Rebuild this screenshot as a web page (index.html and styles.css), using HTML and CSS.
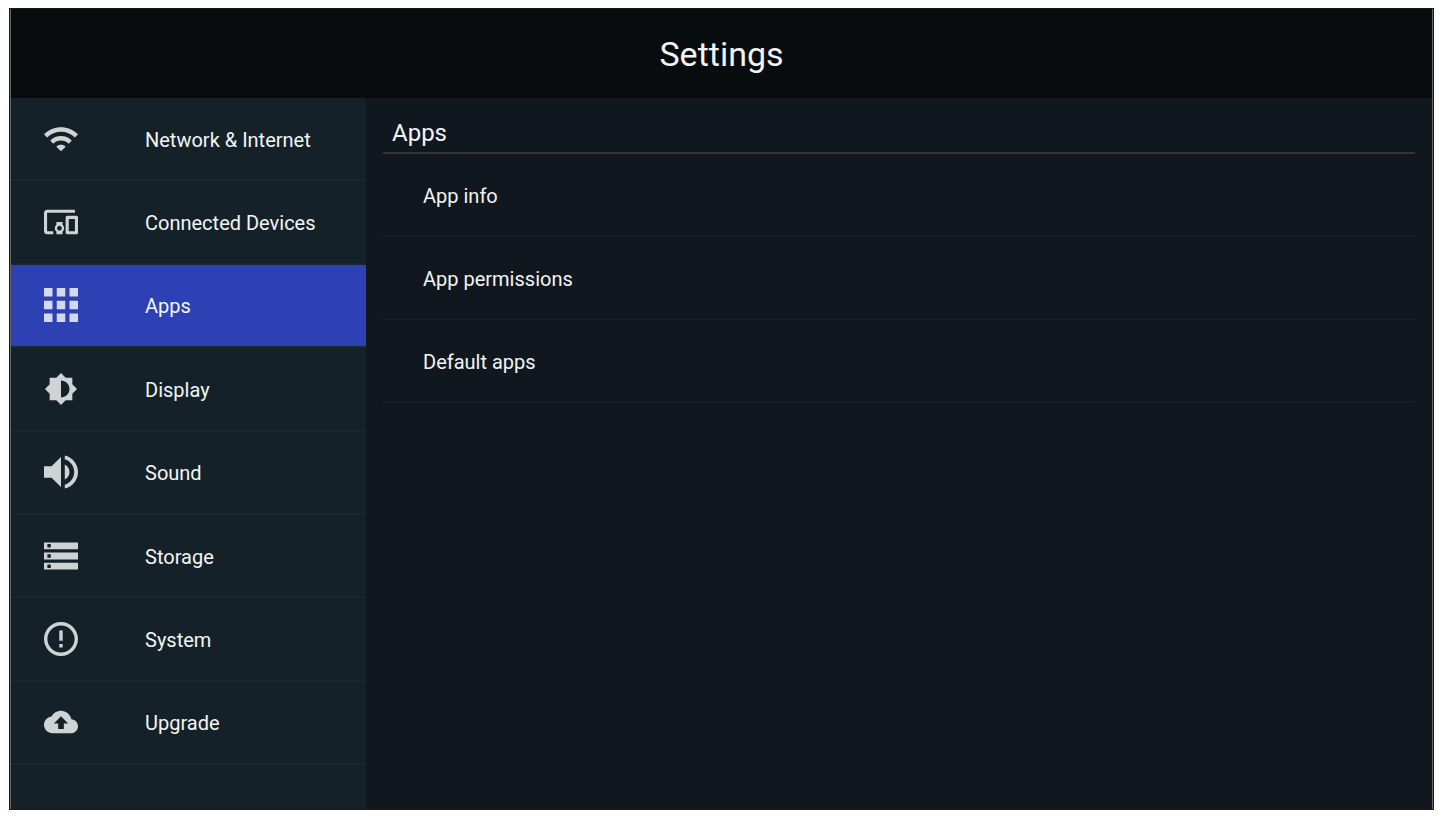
FILE: index.html
```html
<!DOCTYPE html>
<html lang="en">
<head>
  <meta charset="utf-8">
  <title>Settings</title>
  <link rel="stylesheet" href="styles.css">
</head>
<body>
  <div class="screen">
    <header class="header">
      <h1>Settings</h1>
    </header>

    <div class="layout">
      <nav class="sidebar">
        <a class="nav-item" href="#network">
          <svg viewBox="1 1 22 22"><path d="M1 9l2 2c4.97-4.97 13.03-4.97 18 0l2-2C16.93 2.93 7.08 2.93 1 9zm8 8l3 3 3-3c-1.65-1.66-4.34-1.66-6 0zm-4-4l2 2c2.76-2.76 7.24-2.76 10 0l2-2C15.14 9.14 8.87 9.14 5 13z"/></svg>
          <span>Network &amp; Internet</span>
        </a>
        <a class="nav-item" href="#devices">
          <svg viewBox="1 1 22 22"><path d="M3 6h18V4H3c-1.1 0-2 .9-2 2v12c0 1.1.9 2 2 2h4v-2H3V6zm10 6H9v1.78c-.61.55-1 1.33-1 2.22s.39 1.67 1 2.22V20h4v-1.78c.61-.55 1-1.34 1-2.22s-.39-1.67-1-2.22V12zm-2 5.5c-.83 0-1.5-.67-1.5-1.5s.67-1.5 1.5-1.5 1.5.67 1.5 1.5-.67 1.5-1.5 1.5zM22 8h-6c-.5 0-1 .5-1 1v10c0 .5.5 1 1 1h6c.5 0 1-.5 1-1V9c0-.5-.5-1-1-1zm-1 10h-4v-8h4v8z"/></svg>
          <span>Connected Devices</span>
        </a>
        <a class="nav-item active" href="#apps" aria-current="page">
          <svg viewBox="4 4 16 16"><path d="M4 8h4V4H4v4zm6 12h4v-4h-4v4zm-6 0h4v-4H4v4zm0-6h4v-4H4v4zm6 0h4v-4h-4v4zm6-10v4h4V4h-4zm-6 4h4V4h-4v4zm6 6h4v-4h-4v4zm0 6h4v-4h-4v4z"/></svg>
          <span>Apps</span>
        </a>
        <a class="nav-item" href="#display">
          <svg viewBox="0 0 24 24"><path d="M20 15.31L23.31 12 20 8.69V4h-4.69L12 .69 8.69 4H4v4.69L.69 12 4 15.31V20h4.69L12 23.31 15.31 20H20v-4.69zM12 18V6c3.31 0 6 2.69 6 6s-2.69 6-6 6z"/></svg>
          <span>Display</span>
        </a>
        <a class="nav-item" href="#sound">
          <svg viewBox="3 3 18 18"><path d="M3 9v6h4l5 5V4L7 9H3zm13.500 3c0-1.770-1.020-3.290-2.500-4.030v8.050c1.480-.730 2.500-2.250 2.500-4.020zM14 3.230v2.060c2.890.860 5 3.540 5 6.710s-2.110 5.850-5 6.710v2.060c4.010-.910 7-4.490 7-8.770s-2.990-7.860-7-8.770z"/></svg>
          <span>Sound</span>
        </a>
        <a class="nav-item" href="#storage">
          <svg viewBox="2 2 20 20"><path d="M2 20h20v-4H2v4zm2-3h2v2H4v-2zM2 4v4h20V4H2zm4 3H4V5h2v2zm-4 7h20v-4H2v4zm2-3h2v2H4v-2z"/></svg>
          <span>Storage</span>
        </a>
        <a class="nav-item" href="#system">
          <svg viewBox="2 2 20 20"><path d="M11 15h2v2h-2zm0-8h2v6h-2zm.99-5C6.470 2 2 6.480 2 12s4.470 10 9.990 10C17.520 22 22 17.520 22 12S17.520 2 11.990 2zM12 20c-4.420 0-8-3.580-8-8s3.580-8 8-8 8 3.580 8 8-3.580 8-8 8z"/></svg>
          <span>System</span>
        </a>
        <a class="nav-item" href="#upgrade">
          <svg viewBox="0 0 24 24"><path d="M19.350 10.040C18.670 6.590 15.640 4 12 4 9.110 4 6.600 5.640 5.350 8.040 2.340 8.360 0 10.910 0 14c0 3.310 2.690 6 6 6h13c2.760 0 5-2.240 5-5 0-2.640-2.050-4.780-4.650-4.960zM14 13v4h-4v-4H7l5-5 5 5h-3z"/></svg>
          <span>Upgrade</span>
        </a>
      </nav>

      <main class="content">
        <h2>Apps</h2>
        <a class="row" href="#app-info">App info</a>
        <a class="row" href="#app-permissions">App permissions</a>
        <a class="row" href="#default-apps">Default apps</a>
      </main>
    </div>
  </div>
</body>
</html>
```
FILE: styles.css
```css
:root {
  --header: #080c0f;
  --sidebar: #152129;
  --content: #10171e;
  --active: #2d41b5;
  --icon: #d0d3d4;
  --text: #f3f4f4;
}

* {
  margin: 0;
  padding: 0;
  box-sizing: border-box;
}

body {
  min-height: 100vh;
  padding: 8px 10px 6px 9px;
  display: flex;
  background: #fff;
  color: var(--text);
  font-family: Roboto, "Liberation Sans", sans-serif;
  font-size: 20px;
}

.screen {
  flex: 1;
  display: flex;
  flex-direction: column;
  border: 1px solid #1c191b;
  background: var(--content);
  box-shadow: inset 1px 0 #666, inset -1px 0 #666;
  padding: 0 1px;
}

.header {
  height: 89px;
  display: flex;
  align-items: center;
  justify-content: center;
  background: var(--header);
}

h1 {
  font-size: 34px;
  font-weight: 400;
}

.layout {
  flex: 1;
  display: flex;
}

.sidebar {
  width: 355px;
  display: flex;
  flex-direction: column;
  padding-bottom: 44px;
  background: var(--sidebar);
}

.nav-item {
  flex: 1;
  display: flex;
  align-items: center;
  padding-left: 33px;
  border-bottom: 2px solid #1b272e;
  color: inherit;
  text-decoration: none;
}

.nav-item svg {
  width: 34px;
  height: 34px;
  margin-right: 67px;
  fill: var(--icon);
}

.nav-item span {
  padding-top: 2px;
}

.active {
  background: var(--active);
  background-clip: padding-box;
}

.active svg {
  fill: #d5d9f0;
}

.content {
  flex: 1;
  padding: 16px 17px;
}

h2 {
  padding: 0 9px;
  border-bottom: 2px solid #303638;
  font-size: 24px;
  line-height: 38px;
  font-weight: 400;
}

.row {
  display: flex;
  align-items: center;
  height: 83px;
  padding: 2px 40px 0;
  border-bottom: 2px solid #161d24;
  color: inherit;
  text-decoration: none;
}
```
